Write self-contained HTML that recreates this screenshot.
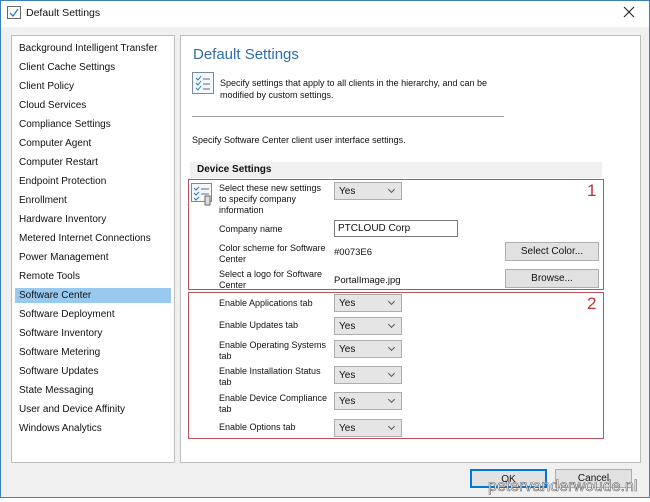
<!DOCTYPE html>
<html><head><style>
*{margin:0;padding:0;box-sizing:border-box}
body{width:650px;height:502px;background:#fff;font-family:"Liberation Sans",sans-serif;font-size:10px;color:#111;position:relative;overflow:hidden}
.a{position:absolute;white-space:nowrap}
.win{position:absolute;left:0;top:0;width:650px;height:498px;border:1px solid #3d7fb8;background:#f0f0f0}
.title{position:absolute;left:0;top:0;width:648px;height:26px;background:#fff}
.list{position:absolute;left:11px;top:35px;width:164px;height:428px;background:#fff;border:1px solid #bdbdbd}
.right{position:absolute;left:180px;top:35px;width:461px;height:428px;background:#fff;border:1px solid #bdbdbd}
.li{position:absolute;left:7px;font-size:10px}
.cb{position:absolute;left:334px;width:68px;height:18px;background:#e5e5e5;border:1px solid #adadad;font-size:10px;padding:3px 0 0 4px}
.cb:after{content:"";position:absolute;right:7px;top:4px;width:4px;height:4px;border-right:1px solid #555;border-bottom:1px solid #555;transform:rotate(45deg)}
.btn{position:absolute;height:19px;background:#e1e1e1;border:1px solid #adadad;text-align:center;font-size:10px;padding-top:3px}
.red{position:absolute;border:1px solid #c0505a}
.num{position:absolute;color:#c0303a;font-size:17px}
.f{position:absolute;white-space:nowrap;left:219px;font-size:9px;line-height:11px}
</style></head><body>
<div class="win">
<div class="title"></div>
</div>
<svg class="a" style="left:7px;top:6px" width="14" height="13"><rect x="0.5" y="0.5" width="13" height="12" fill="#fff" stroke="#666"/><path d="M3 7 L6 10 L11 3" stroke="#2a7ab8" fill="none" stroke-width="1.3"/></svg>
<div class="a" style="left:26px;top:7px;font-size:10.5px">Default Settings</div>
<svg class="a" style="left:623px;top:6px" width="12" height="12"><path d="M1 1L11 11M11 1L1 11" stroke="#222" stroke-width="1.1"/></svg>

<div class="list">
<div style="position:absolute;left:3px;top:252px;width:156px;height:15px;background:#99c9ef"></div>
<div class="li" style="top:7px">Background Intelligent Transfer</div>
<div class="li" style="top:26px">Client Cache Settings</div>
<div class="li" style="top:45px">Client Policy</div>
<div class="li" style="top:64px">Cloud Services</div>
<div class="li" style="top:83px">Compliance Settings</div>
<div class="li" style="top:102px">Computer Agent</div>
<div class="li" style="top:121px">Computer Restart</div>
<div class="li" style="top:140px">Endpoint Protection</div>
<div class="li" style="top:159px">Enrollment</div>
<div class="li" style="top:178px">Hardware Inventory</div>
<div class="li" style="top:197px">Metered Internet Connections</div>
<div class="li" style="top:216px">Power Management</div>
<div class="li" style="top:235px">Remote Tools</div>
<div class="li" style="top:254px">Software Center</div>
<div class="li" style="top:273px">Software Deployment</div>
<div class="li" style="top:292px">Software Inventory</div>
<div class="li" style="top:311px">Software Metering</div>
<div class="li" style="top:330px">Software Updates</div>
<div class="li" style="top:349px">State Messaging</div>
<div class="li" style="top:368px">User and Device Affinity</div>
<div class="li" style="top:387px">Windows Analytics</div>
</div>

<div class="right"></div>
<div class="a" style="left:193px;top:46px;font-size:15px;color:#2e6da8">Default Settings</div>
<svg class="a" style="left:192px;top:72px" width="22" height="22"><rect x="0.5" y="0.5" width="21" height="21" fill="#f4f8fc" stroke="#7a8a9a"/><path d="M4 6l2 2 3-4M4 11l2 2 3-4M4 16l2 2 3-4" stroke="#2a7ab8" fill="none"/><path d="M11 7h7M11 12h7M11 17h7" stroke="#667"/></svg>
<div class="a" style="left:220px;top:77px;font-size:9px;line-height:12px">Specify settings that apply to all clients in the hierarchy, and can be<br>modified by custom settings.</div>
<div class="a" style="left:192px;top:116px;width:312px;height:1px;background:#a0a0a0"></div>
<div class="a" style="left:192px;top:135px;font-size:9px">Specify Software Center client user interface settings.</div>
<div class="a" style="left:190px;top:162px;width:412px;height:16px;background:#f0f0f0"></div>
<div class="a" style="left:197px;top:164px;font-weight:bold;font-size:10px">Device Settings</div>

<div class="red" style="left:188px;top:179px;width:416px;height:111px"></div>
<div class="num" style="left:587px;top:181px">1</div>
<svg class="a" style="left:191px;top:183px" width="24" height="24"><rect x="0.5" y="0.5" width="20" height="18" fill="#f4f8fc" stroke="#7a8a9a"/><path d="M3 5l2 2 3-3M3 10l2 2 3-3M3 15l2 2 3-3" stroke="#2a7ab8" fill="none"/><path d="M10 6h8M10 11h8" stroke="#667"/><rect x="14" y="13" width="5" height="9" fill="#ddd" stroke="#666"/></svg>
<div class="f" style="top:183px">Select these new settings<br>to specify company<br>information</div>
<div class="cb" style="top:182px">Yes</div>
<div class="f" style="top:224px">Company name</div>
<div class="a" style="left:334px;top:220px;width:124px;height:17px;background:#fff;border:1px solid #7a7a7a;padding:2px 0 0 3px;font-size:10px">PTCLOUD Corp</div>
<div class="f" style="top:243px">Color scheme for Software<br>Center</div>
<div class="a" style="left:334px;top:247px;font-size:9.5px">#0073E6</div>
<div class="btn" style="left:505px;top:242px;width:94px">Select Color...</div>
<div class="f" style="top:269px">Select a logo for Software<br>Center</div>
<div class="a" style="left:334px;top:275px;font-size:9.5px">PortalImage.jpg</div>
<div class="btn" style="left:505px;top:269px;width:94px">Browse...</div>

<div class="red" style="left:188px;top:292px;width:416px;height:147px"></div>
<div class="num" style="left:587px;top:294px">2</div>
<div class="f" style="top:298px">Enable Applications tab</div>
<div class="cb" style="top:294px">Yes</div>
<div class="f" style="top:320px">Enable Updates tab</div>
<div class="cb" style="top:317px">Yes</div>
<div class="f" style="top:340px">Enable Operating Systems<br>tab</div>
<div class="cb" style="top:340px">Yes</div>
<div class="f" style="top:366px">Enable Installation Status<br>tab</div>
<div class="cb" style="top:366px">Yes</div>
<div class="f" style="top:393px">Enable Device Compliance<br>tab</div>
<div class="cb" style="top:392px">Yes</div>
<div class="f" style="top:422px">Enable Options tab</div>
<div class="cb" style="top:419px">Yes</div>

<div class="btn" style="left:470px;top:469px;width:77px;border:2px solid #0078d7">OK</div>
<div class="btn" style="left:555px;top:469px;width:77px">Cancel</div>
<div class="a" style="left:488px;top:478px;font-size:16px;color:#fff;-webkit-text-stroke:0.6px #666">petervanderwoude.nl</div>
</body></html>
